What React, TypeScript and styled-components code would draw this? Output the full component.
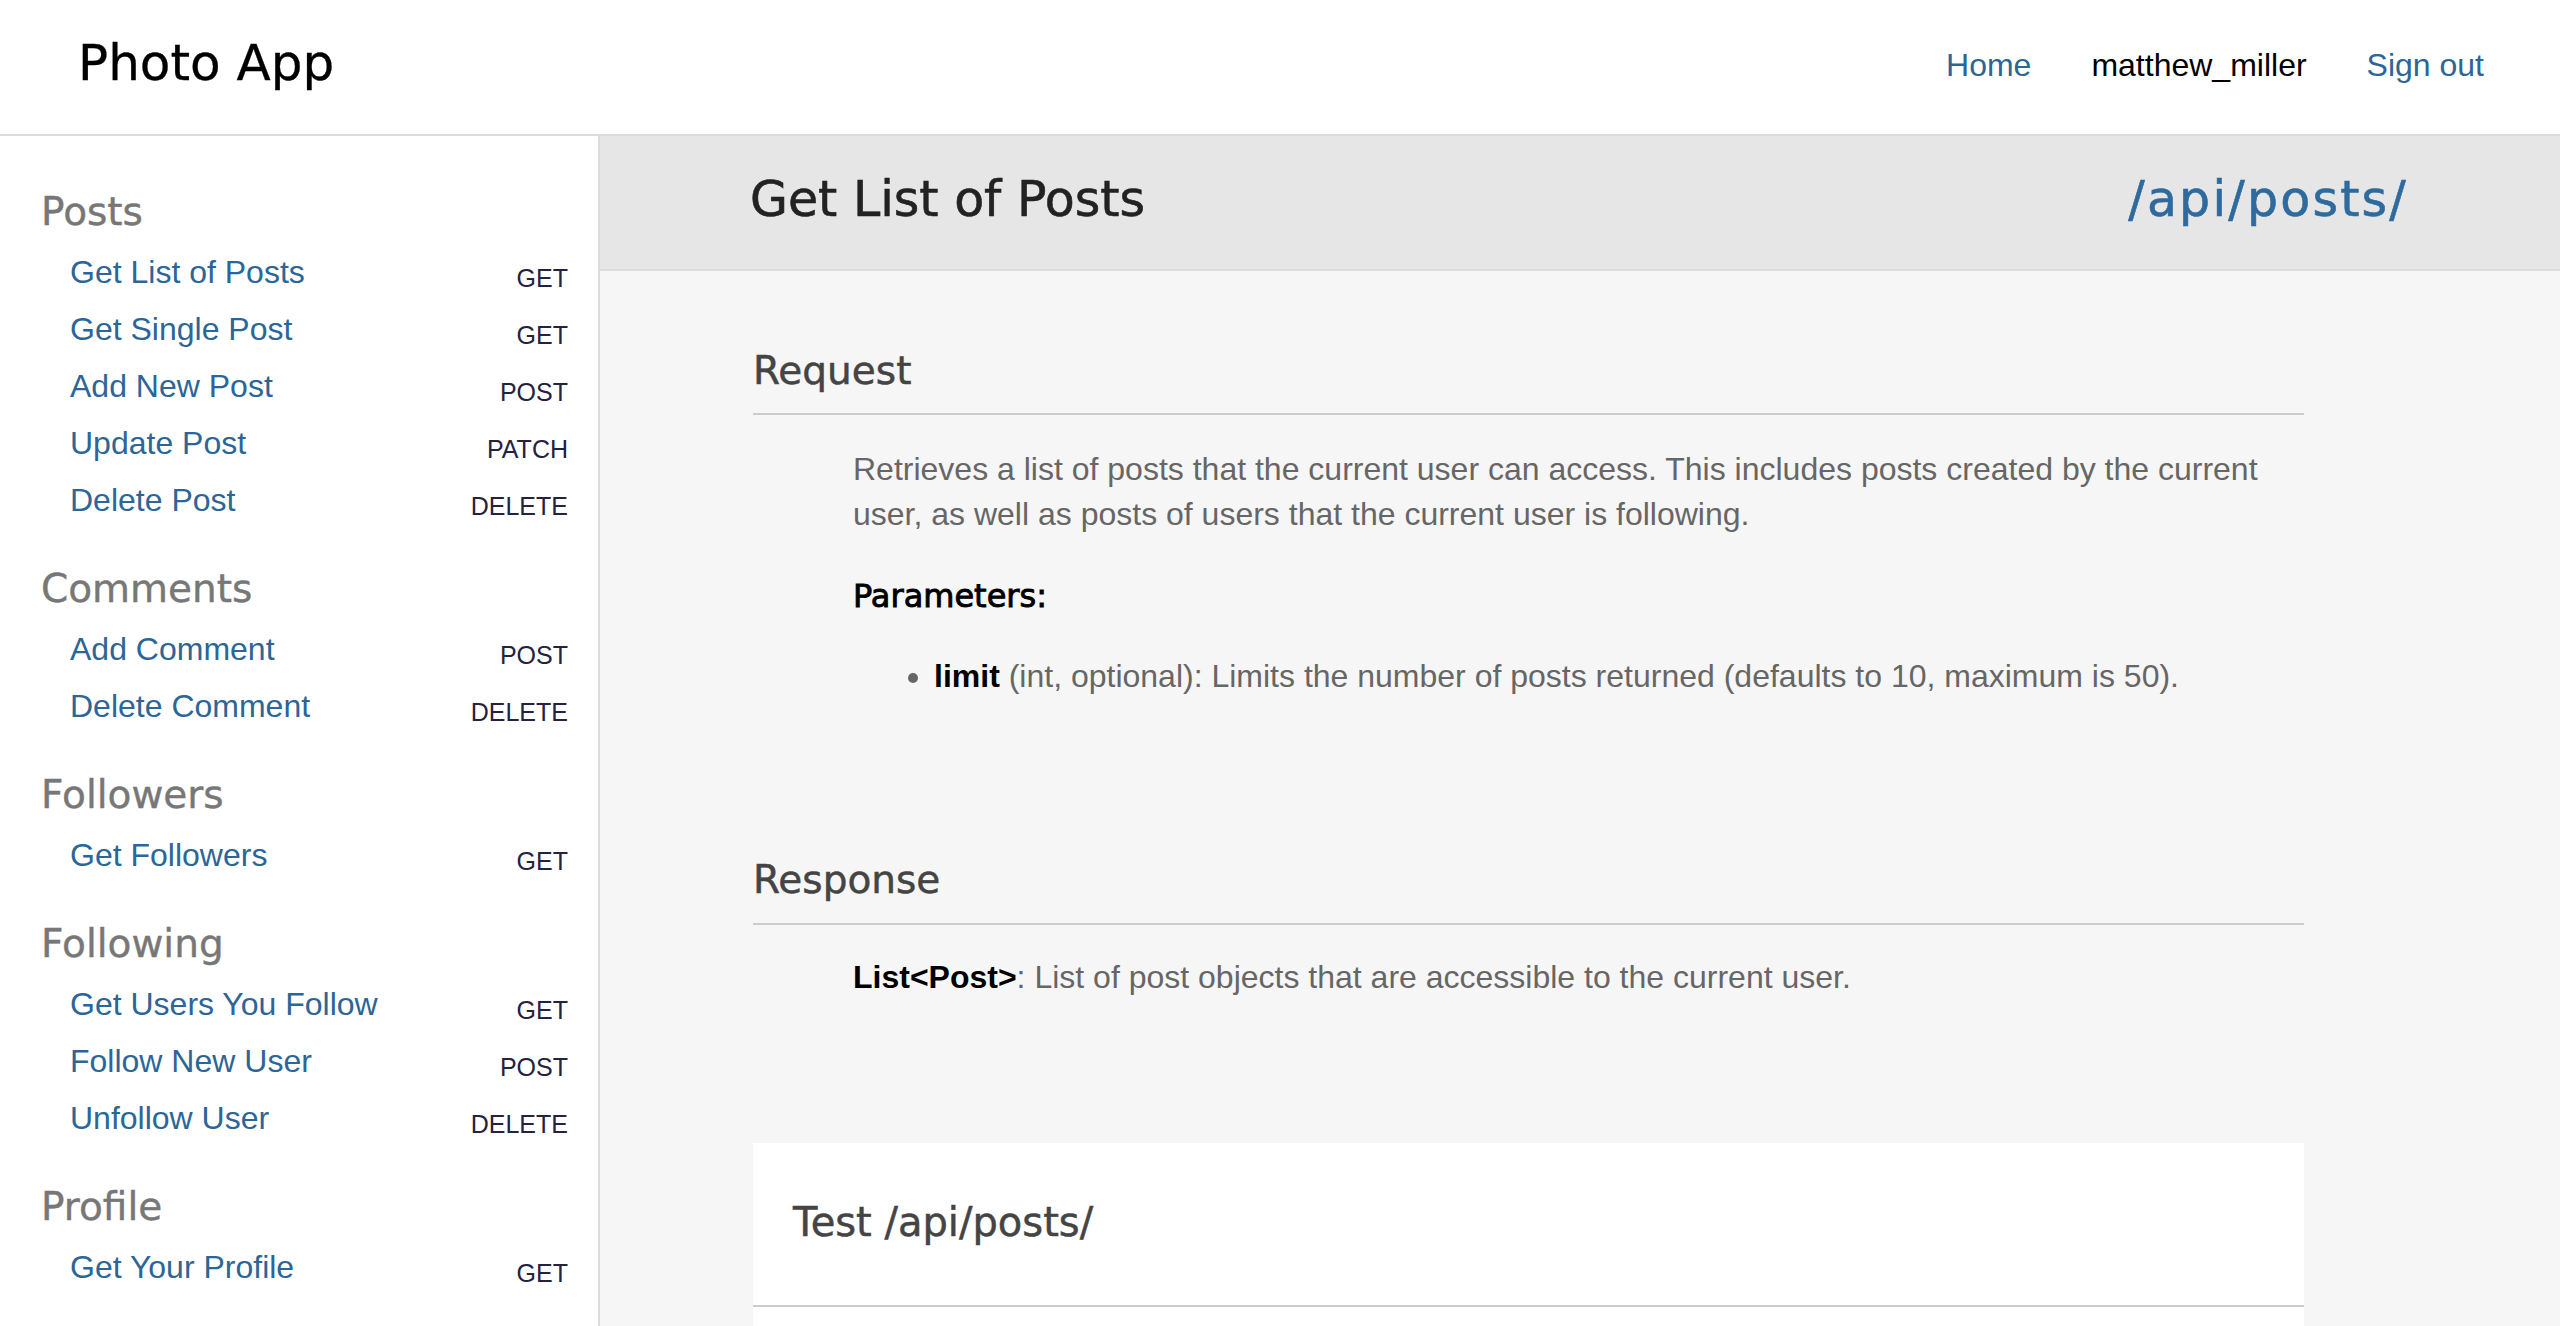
import React from "react";
import styled, { createGlobalStyle } from "styled-components";

const GlobalStyle = createGlobalStyle`
  * { box-sizing: border-box; }
  html, body { margin: 0; padding: 0; height: 100%; overflow: hidden; }
  body {
    font-family: "Liberation Sans", Arial, Helvetica, sans-serif;
    background: #ffffff;
    color: #000;
  }
  #root { height: 100%; }
`;

const HEAD = `"DejaVu Sans", "Noto Sans", sans-serif`;
const LINK = "#2c6698";

const Page = styled.div`
  display: flex;
  flex-direction: column;
  height: 100vh;
`;

const TopBar = styled.header`
  flex: 0 0 136px;
  display: flex;
  align-items: center;
  justify-content: space-between;
  padding: 0 76px 8px 78px;
  background: #ffffff;
  border-bottom: 2px solid #dcdcdc;
`;

const Logo = styled.div`
  font-family: ${HEAD};
  font-size: 50px;
  line-height: 60px;
  color: #000;
  -webkit-text-stroke: 0.3px #000;
`;

const Nav = styled.nav`
  display: flex;
  gap: 60px;
  margin-top: 4px;
  font-size: 32px;
  line-height: 40px;
`;

const NavLink = styled.a<{ $plain?: boolean }>`
  color: ${(p) => (p.$plain ? "#000" : LINK)};
  text-decoration: none;
`;

const Body = styled.div`
  flex: 1;
  display: flex;
  min-height: 0;
`;

const Sidebar = styled.aside`
  flex: 0 0 600px;
  padding: 51.5px 30px 0 41px;
  background: #ffffff;
  border-right: 2px solid #dcdcdc;
  overflow: hidden;
`;

const Group = styled.section`
  & + & {
    margin-top: 36px;
  }
`;

const GroupTitle = styled.h3`
  margin: 0 0 8px;
  font-family: ${HEAD};
  font-weight: normal;
  font-size: 39px;
  line-height: 48px;
  color: #777;
  -webkit-text-stroke: 0.4px #777;
`;

const Row = styled.div`
  display: flex;
  justify-content: space-between;
  align-items: flex-end;
  height: 57px;
  padding-left: 29px;
`;

const RowLink = styled.a`
  font-size: 32px;
  line-height: 57px;
  color: ${LINK};
  text-decoration: none;
`;

const Method = styled.span`
  font-size: 25px;
  line-height: 46px;
  color: #24223f;
`;

const Main = styled.main`
  flex: 1;
  display: flex;
  flex-direction: column;
  min-width: 0;
  background: #f6f6f6;
  overflow: hidden;
`;

const TitleBand = styled.div`
  flex: 0 0 135px;
  display: flex;
  align-items: center;
  justify-content: space-between;
  padding: 0 152px 5px 150px;
  background: #e6e6e6;
  border-bottom: 2px solid #dcdcdc;
`;

const Title = styled.h1`
  margin: 0;
  font-family: ${HEAD};
  font-weight: normal;
  font-size: 49px;
  line-height: 60px;
  color: #222;
  -webkit-text-stroke: 0.6px #222;
`;

const Endpoint = styled.div`
  font-family: ${HEAD};
  font-size: 49px;
  line-height: 60px;
  letter-spacing: 2.2px;
  color: #2e6a9e;
  -webkit-text-stroke: 0.6px #2e6a9e;
`;

const Content = styled.div`
  flex: 1;
  display: flex;
  flex-direction: column;
  width: 1704px;
  padding: 75.5px 0 0 153px;
  min-height: 0;
`;

const Section = styled.section<{ $gap?: number }>`
  margin-bottom: ${(p) => p.$gap ?? 0}px;
`;

const SectionHeading = styled.h2<{ $pad: number }>`
  margin: 0;
  padding-bottom: ${(p) => p.$pad}px;
  font-family: ${HEAD};
  font-weight: normal;
  font-size: 39px;
  line-height: 48px;
  color: #444;
  -webkit-text-stroke: 0.5px #444;
  border-bottom: 2px solid #cccccc;
`;

const SectionBody = styled.div<{ $top: number }>`
  padding: ${(p) => p.$top}px 0 0 100px;
  font-size: 32px;
  line-height: 45px;
  color: #666;
`;

const Para = styled.p`
  margin: 0;
`;

const ParamTitle = styled.h4`
  margin: 39px 0 0;
  font-family: ${HEAD};
  font-weight: normal;
  font-size: 32px;
  line-height: 40px;
  color: #000;
  -webkit-text-stroke: 0.9px #000;
`;

const ParamList = styled.ul`
  margin: 38px 0 0;
  padding-left: 81px;
  li::marker {
    color: #666;
  }
`;

const Strong = styled.b`
  color: #000;
`;

const TestBox = styled.div`
  flex: 1;
  margin-top: 143px;
  background: #ffffff;
`;

const TestHeading = styled.h3`
  margin: 0;
  padding: 55px 40px 59px;
  font-family: ${HEAD};
  font-weight: normal;
  font-size: 40px;
  line-height: 48px;
  color: #444;
  -webkit-text-stroke: 0.5px #444;
  border-bottom: 2px solid #cccccc;
`;

type Item = { label: string; method: string };
type Grp = { title: string; items: Item[] };

const groups: Grp[] = [
  {
    title: "Posts",
    items: [
      { label: "Get List of Posts", method: "GET" },
      { label: "Get Single Post", method: "GET" },
      { label: "Add New Post", method: "POST" },
      { label: "Update Post", method: "PATCH" },
      { label: "Delete Post", method: "DELETE" },
    ],
  },
  {
    title: "Comments",
    items: [
      { label: "Add Comment", method: "POST" },
      { label: "Delete Comment", method: "DELETE" },
    ],
  },
  {
    title: "Followers",
    items: [{ label: "Get Followers", method: "GET" }],
  },
  {
    title: "Following",
    items: [
      { label: "Get Users You Follow", method: "GET" },
      { label: "Follow New User", method: "POST" },
      { label: "Unfollow User", method: "DELETE" },
    ],
  },
  {
    title: "Profile",
    items: [{ label: "Get Your Profile", method: "GET" }],
  },
];

export default function App() {
  return (
    <>
      <GlobalStyle />
      <Page>
        <TopBar>
          <Logo>Photo App</Logo>
          <Nav>
            <NavLink href="#">Home</NavLink>
            <NavLink $plain>matthew_miller</NavLink>
            <NavLink href="#">Sign out</NavLink>
          </Nav>
        </TopBar>
        <Body>
          <Sidebar>
            {groups.map((g) => (
              <Group key={g.title}>
                <GroupTitle>{g.title}</GroupTitle>
                {g.items.map((it) => (
                  <Row key={it.label}>
                    <RowLink href="#">{it.label}</RowLink>
                    <Method>{it.method}</Method>
                  </Row>
                ))}
              </Group>
            ))}
          </Sidebar>
          <Main>
            <TitleBand>
              <Title>Get List of Posts</Title>
              <Endpoint>/api/posts/</Endpoint>
            </TitleBand>
            <Content>
              <Section $gap={156.5}>
                <SectionHeading $pad={18.5}>Request</SectionHeading>
                <SectionBody $top={32}>
                  <Para>
                    Retrieves a list of posts that the current user can access. This includes
                    posts created by the current user, as well as posts of users that the
                    current user is following.
                  </Para>
                  <ParamTitle>Parameters:</ParamTitle>
                  <ParamList>
                    <li>
                      <Strong>limit</Strong> (int, optional): Limits the number of posts returned
                      (defaults to 10, maximum is 50).
                    </li>
                  </ParamList>
                </SectionBody>
              </Section>
              <Section>
                <SectionHeading $pad={19.5}>Response</SectionHeading>
                <SectionBody $top={29.5}>
                  <Para>
                    <Strong>List&lt;Post&gt;</Strong>: List of post objects that are accessible to
                    the current user.
                  </Para>
                </SectionBody>
              </Section>
              <TestBox>
                <TestHeading>Test /api/posts/</TestHeading>
              </TestBox>
            </Content>
          </Main>
        </Body>
      </Page>
    </>
  );
}
